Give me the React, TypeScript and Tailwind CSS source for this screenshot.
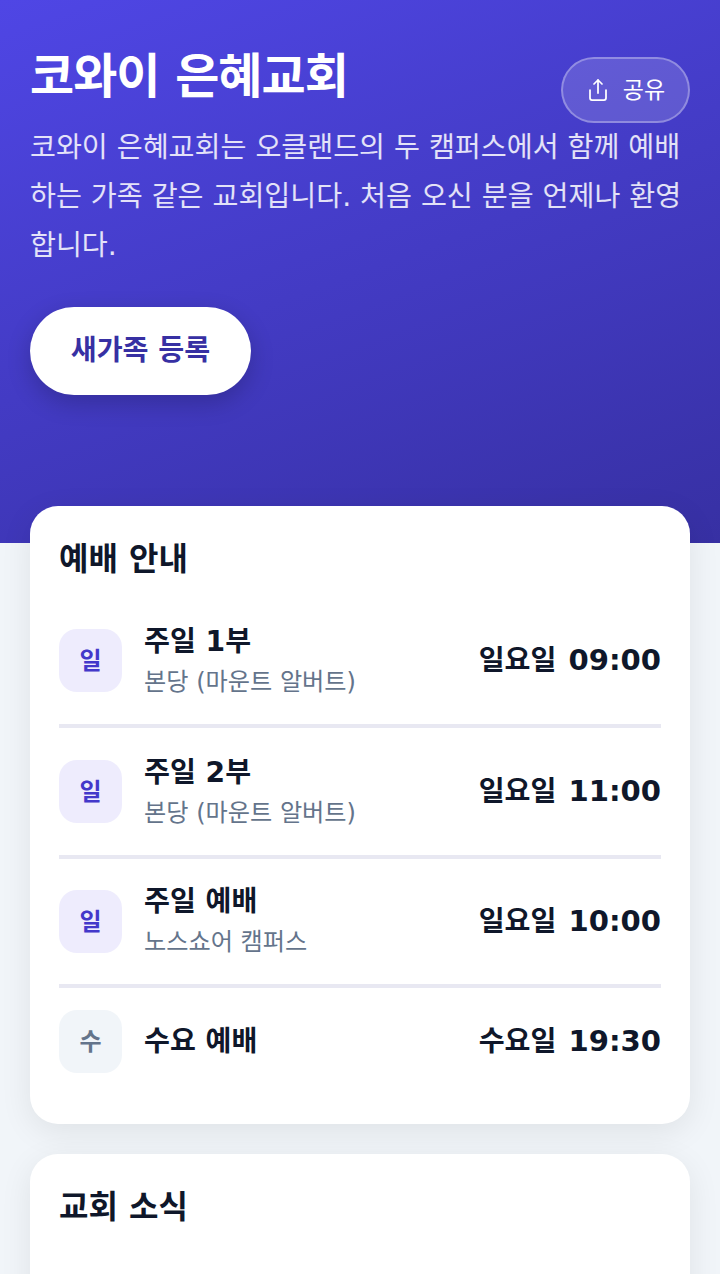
import React from 'react';
import { Share } from 'lucide-react';

const services = [
  { badge: '일', name: '주일 1부', place: '본당 (마운트 알버트)', day: '일요일', clock: '09:00', tone: 'sun', latin: true },
  { badge: '일', name: '주일 2부', place: '본당 (마운트 알버트)', day: '일요일', clock: '11:00', tone: 'sun', latin: true },
  { badge: '일', name: '주일 예배', place: '노스쇼어 캠퍼스', day: '일요일', clock: '10:00', tone: 'sun', latin: false },
  { badge: '수', name: '수요 예배', place: '', day: '수요일', clock: '19:30', tone: 'wed', latin: false },
];

export default function App() {
  return (
    <div className="h-[1274px] overflow-hidden bg-[#f1f5f9] font-['DejaVu_Sans','Noto_Sans_CJK_JP',sans-serif]">
      <header className="h-[543px] bg-[linear-gradient(160deg,#4f46e5,#3730a3)] px-[30px] pt-[46px]">
        <div className="flex items-start">
          <h1 className="flex-1 text-[48px] leading-[60px] font-bold tracking-[-1px] text-white">코와이 은혜교회</h1>
          <button className="mt-[11px] flex h-[66px] w-[129px] items-center justify-center gap-[13px] rounded-full border-2 border-white/30 bg-white/15 text-[23px] text-white">
            <Share size={24} strokeWidth={1.75} />
            <span>공유</span>
          </button>
        </div>
        <p className="text-[28.2px] leading-[49px] text-white/85">
          코와이 은혜교회는 오클랜드의 두 캠퍼스에서 함께 예배하는 가족 같은 교회입니다. 처음 오신 분을 언제나 환영합니다.
        </p>
        <button className="mt-[37px] h-[88px] w-[221px] rounded-[44px] bg-white text-[28.2px] font-bold text-[#3730a3] shadow-[0_8px_24px_rgba(0,0,0,0.2)]">
          새가족 등록
        </button>
      </header>

      <main className="mt-[-37px] flex flex-col gap-[30px] px-[30px]">
        <section className="rounded-[28px] bg-white px-[29px] pt-[30px] pb-[29px] shadow-[0_8px_32px_rgba(0,0,0,0.08)]">
          <h2 className="text-[32px] leading-[46px] font-bold text-[#0f172a]">예배 안내</h2>
          <ul className="mt-[15px]">
            {services.map((s, i) => (
              <li key={i} className={`flex items-center py-[22px] ${i < 3 ? 'border-b-4 border-[#e8e8f2]' : ''}`}>
                <div className={`flex h-[63px] w-[63px] items-center justify-center rounded-[18px] text-[24px] font-bold ${s.tone === 'sun' ? 'bg-[#eeecfd] text-[#4338ca]' : 'bg-[#f1f5f9] text-[#64748b]'}`}>
                  {s.badge}
                </div>
                <div className="ml-[22px] flex-1">
                  <div className={`text-[28.16px] font-bold text-[#0f172a] ${s.place ? (s.latin ? 'leading-[46px]' : 'leading-[42px]') : 'leading-[40px]'}`}>{s.name}</div>
                  {s.place && (
                    <div className={`text-[24.16px] text-[#64748b] ${s.latin ? 'pb-[2px] leading-[35px]' : 'pb-px leading-[38px]'}`}>{s.place}</div>
                  )}
                </div>
                <div className="flex items-baseline gap-[12px] font-bold text-[#0f172a]">
                  <span className="text-[28.16px]">{s.day}</span>
                  <span className="text-[29.1px]">{s.clock}</span>
                </div>
              </li>
            ))}
          </ul>
        </section>
        <section className="h-[300px] rounded-[28px] bg-white px-[29px] pt-[30px] shadow-[0_8px_32px_rgba(0,0,0,0.08)]">
          <h2 className="text-[32px] leading-[46px] font-bold text-[#0f172a]">교회 소식</h2>
        </section>
      </main>
    </div>
  );
}
